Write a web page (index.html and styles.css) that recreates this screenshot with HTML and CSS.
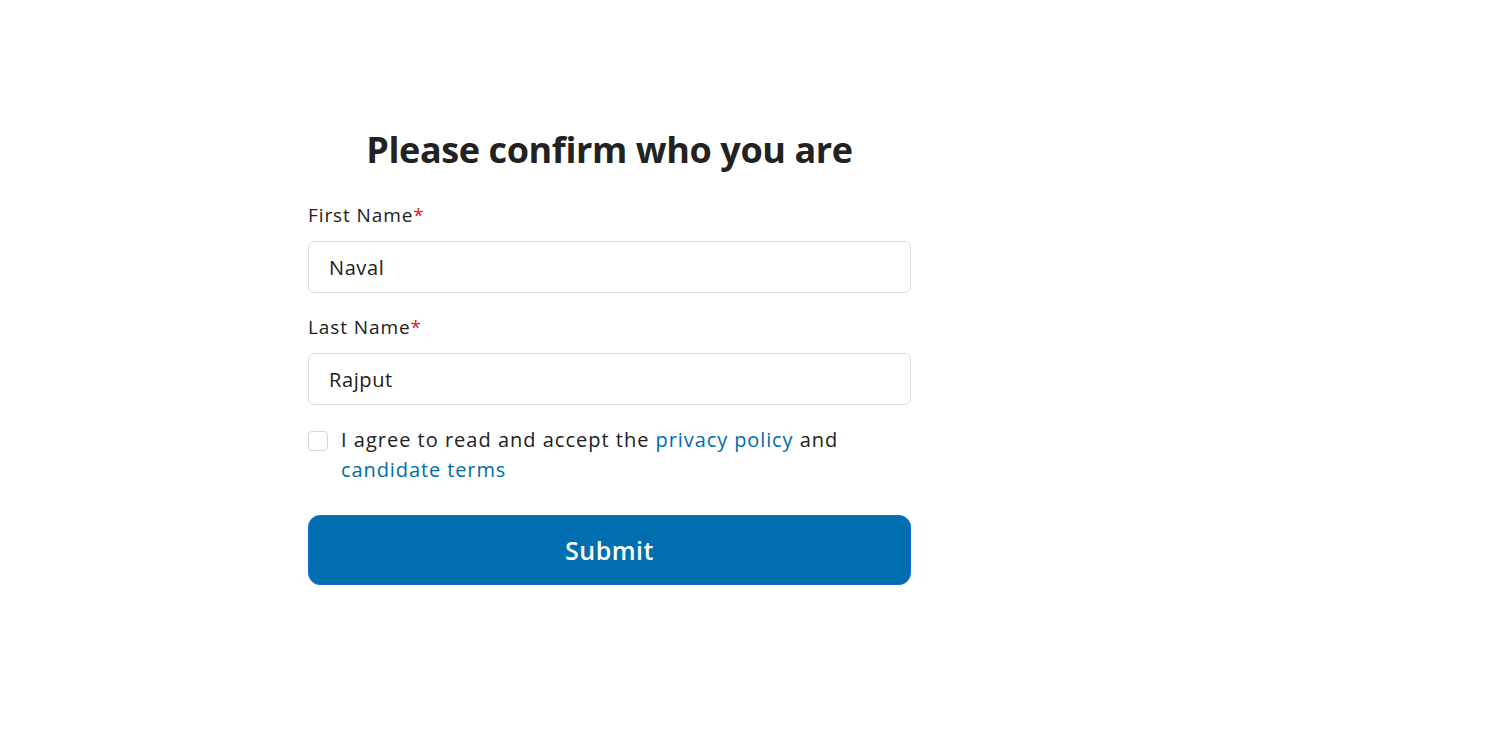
FILE: index.html
```html
<!DOCTYPE html>
<html lang="en">
<head>
<meta charset="utf-8">
<title>Please confirm who you are</title>
<link rel="stylesheet" href="styles.css">
</head>
<body>
<main class="page">
  <form class="card">
    <h1 class="title">Please confirm who you are</h1>
    <div class="field">
      <label class="label" for="fn">First Name<span class="req">*</span></label>
      <input class="input" id="fn" type="text" value="Naval">
    </div>
    <div class="field">
      <label class="label" for="ln">Last Name<span class="req">*</span></label>
      <input class="input" id="ln" type="text" value="Rajput">
    </div>
    <div class="agree">
      <span class="box"></span>
      <p class="agree-text">I agree to read and accept the <a class="link" href="#">privacy policy</a> and <a class="link" href="#">candidate terms</a></p>
    </div>
    <button class="submit" type="button">Submit</button>
  </form>
</main>
</body>
</html>
```
FILE: styles.css
```css
* { box-sizing: border-box; }
html, body { margin: 0; padding: 0; background: #fff; }
body {
  font-family: "Open Sans", "Liberation Sans", sans-serif;
  color: #212121;
}
.page {
  padding: 128px 0 0 308px;
}
.card {
  width: 603px;
  display: flex;
  flex-direction: column;
}
.title {
  margin: 0 0 31px;
  text-align: center;
  font-size: 36px;
  font-weight: 700;
  line-height: 44px;
  color: #222;
  letter-spacing: -0.4px;
}
.field {
  display: flex;
  flex-direction: column;
  margin-bottom: 22px;
}
.label {
  font-size: 19px;
  line-height: 24px;
  margin-bottom: 14px;
  letter-spacing: 0.9px;
}
.req { color: #e5141c; }
.input {
  height: 52px;
  border: 1px solid #dedede;
  border-radius: 6px;
  padding: 0 20px;
  font-family: inherit;
  font-size: 20px;
  letter-spacing: 0.6px;
  color: #212121;
  background: #fff;
  outline: none;
}
.agree {
  display: flex;
  align-items: flex-start;
  gap: 13px;
  margin-top: 3px;
}
.box {
  flex: none;
  width: 20px;
  height: 20px;
  border: 1px solid #d8d8d8;
  border-radius: 4px;
  margin-top: 1px;
}
.agree-text {
  margin: 0;
  font-size: 20px;
  line-height: 30px;
  letter-spacing: 1px;
  margin-top: -5px;
}
.link { color: #006cad; text-decoration: none; font-weight: 500; letter-spacing: 0.9px; }
.submit {
  margin-top: 30px;
  height: 70px;
  border: 1.5px solid #1a6fd8;
  border-radius: 12px;
  background: #006eaf;
  color: #fff;
  font-family: inherit;
  font-size: 25px;
  font-weight: 600;
  letter-spacing: 0.5px;
}
```
